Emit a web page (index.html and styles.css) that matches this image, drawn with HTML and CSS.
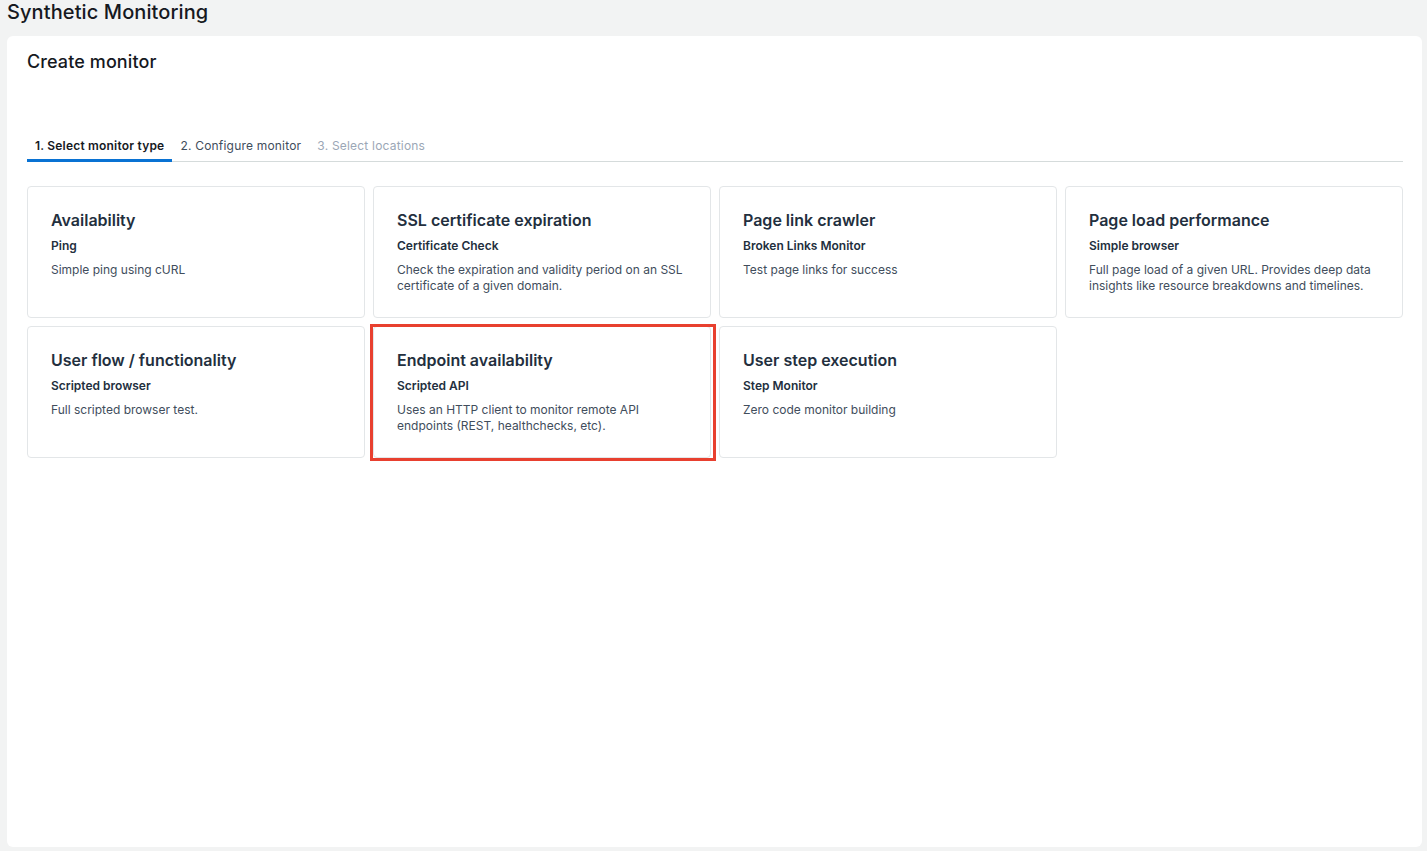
FILE: index.html
```html
<!DOCTYPE html>
<html>
<head>
<meta charset="utf-8">
<link rel="stylesheet" href="styles.css">
</head>
<body>
<h1 class="app-title">Synthetic Monitoring</h1>
<main class="panel">
  <h2 class="panel-title">Create monitor</h2>
  <nav class="tabs">
    <div class="tab active">1. Select monitor type</div>
    <div class="tab">2. Configure monitor</div>
    <div class="tab disabled">3. Select locations</div>
  </nav>
  <div class="grid">
    <div class="card">
      <div class="card-title">Availability</div>
      <div class="card-sub">Ping</div>
      <div class="card-desc">Simple ping using cURL</div>
    </div>
    <div class="card">
      <div class="card-title">SSL certificate expiration</div>
      <div class="card-sub">Certificate Check</div>
      <div class="card-desc">Check the expiration and validity period on an SSL certificate of a given domain.</div>
    </div>
    <div class="card">
      <div class="card-title">Page link crawler</div>
      <div class="card-sub">Broken Links Monitor</div>
      <div class="card-desc">Test page links for success</div>
    </div>
    <div class="card">
      <div class="card-title">Page load performance</div>
      <div class="card-sub">Simple browser</div>
      <div class="card-desc">Full page load of a given URL. Provides deep data insights like resource breakdowns and timelines.</div>
    </div>
    <div class="card">
      <div class="card-title">User flow / functionality</div>
      <div class="card-sub">Scripted browser</div>
      <div class="card-desc">Full scripted browser test.</div>
    </div>
    <div class="card highlighted">
      <div class="card-title">Endpoint availability</div>
      <div class="card-sub">Scripted API</div>
      <div class="card-desc">Uses an HTTP client to monitor remote API endpoints (REST, healthchecks, etc).</div>
    </div>
    <div class="card">
      <div class="card-title">User step execution</div>
      <div class="card-sub">Step Monitor</div>
      <div class="card-desc">Zero code monitor building</div>
    </div>
  </div>
</main>
</body>
</html>
```
FILE: styles.css
```css
* { box-sizing: border-box; }
html, body { margin: 0; padding: 0; }
body {
  background: #f2f3f3;
  font-family: Inter, "Noto Sans", Arial, sans-serif;
  color: #16191f;
  padding: 0 5px 4px 7px;
  height: 851px;
  display: flex;
  flex-direction: column;
}
.app-title {
  margin: 0;
  font-size: 20px;
  font-weight: 500;
  line-height: 24px;
  height: 36px;
  color: #16191f;
  letter-spacing: 0.1px;
}
.panel {
  flex: 1;
  background: #fff;
  border-radius: 6px;
  padding: 14px 19px 20px 20px;
}
.panel-title {
  margin: 0;
  font-size: 18px;
  font-weight: 500;
  line-height: 24px;
  letter-spacing: 0.1px;
}
.tabs {
  display: flex;
  margin-top: 62px;
  border-bottom: 1px solid #d5dbdb;
}
.tab {
  font-size: 12px;
  line-height: 16px;
  padding: 2px 8px 5px 8px;
  color: #414d5c;
  margin-bottom: -1px;
  border-bottom: 3px solid transparent;
  letter-spacing: 0.2px;
}
.tab.active {
  font-weight: 600;
  color: #16191f;
  border-bottom-color: #0972d3;
}
.tab.disabled { color: #9ba7b6; }
.grid {
  margin-top: 24px;
  display: grid;
  grid-template-columns: repeat(4, 1fr);
  gap: 8px;
}
.card {
  position: relative;
  border: 1px solid #e3e6e8;
  border-radius: 4px;
  height: 132px;
  padding: 21px 23px 0 23px;
}
.card.highlighted::after {
  content: "";
  position: absolute;
  left: -4px;
  top: -3px;
  right: -6px;
  bottom: -4px;
  border: 3px solid #e8402f;
}
.card-title {
  font-size: 16px;
  font-weight: 600;
  line-height: 24px;
  color: #232f3e;
}
.card-sub {
  margin-top: 6px;
  font-size: 12px;
  font-weight: 600;
  line-height: 16px;
  color: #232f3e;
}
.card-desc {
  margin-top: 8px;
  font-size: 12px;
  line-height: 16px;
  color: #414d5c;
}
```
